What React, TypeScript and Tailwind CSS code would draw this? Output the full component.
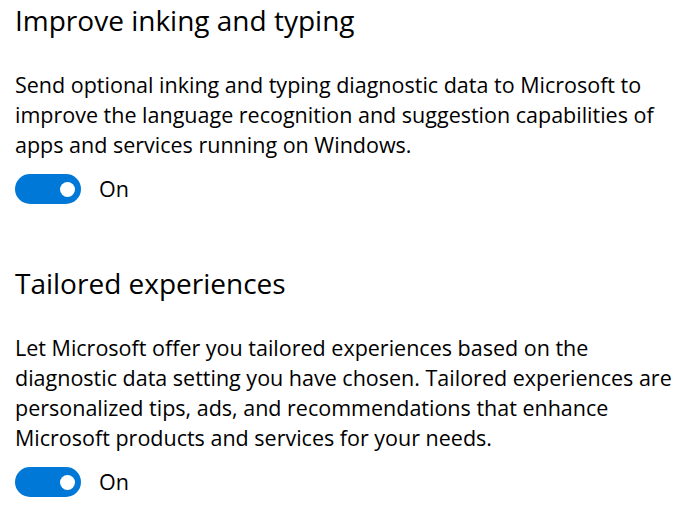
import React from "react";

const Toggle = () => {
  return (
    <div className="flex items-center">
      <div className="flex items-center justify-end w-[66px] h-[30px] rounded-full bg-[#0078d7] pr-[6px]">
        <div className="w-[15px] h-[15px] rounded-full bg-white" />
      </div>
      <span className="ml-[18px] text-[21.5px] leading-[30px] text-black">On</span>
    </div>
  );
};

const Setting = ({
  title,
  lines,
  className = "",
}: {
  title: string;
  lines: string[];
  className?: string;
}) => {
  return (
    <section className={className}>
      <h2 className="text-[28px] leading-[40px] font-normal text-black whitespace-nowrap">
        {title}
      </h2>
      <p className="mt-[30px] text-[21.5px] leading-[30px] text-black whitespace-nowrap">
        {lines.map((line, i) => (
          <React.Fragment key={i}>
            {line}
            {i < lines.length - 1 && <br />}
          </React.Fragment>
        ))}
      </p>
      <div className="mt-[14px]">
        <Toggle />
      </div>
    </section>
  );
};

export default function App() {
  return (
    <div className="w-[675px] h-[510px] overflow-hidden bg-white pl-[15px] font-['Open_Sans',sans-serif]">
      <Setting
        title="Improve inking and typing"
        lines={[
          "Send optional inking and typing diagnostic data to Microsoft to",
          "improve the language recognition and suggestion capabilities of",
          "apps and services running on Windows.",
        ]}
      />
      <Setting
        className="mt-[59px]"
        title="Tailored experiences"
        lines={[
          "Let Microsoft offer you tailored experiences based on the",
          "diagnostic data setting you have chosen. Tailored experiences are",
          "personalized tips, ads, and recommendations that enhance",
          "Microsoft products and services for your needs.",
        ]}
      />
    </div>
  );
}
